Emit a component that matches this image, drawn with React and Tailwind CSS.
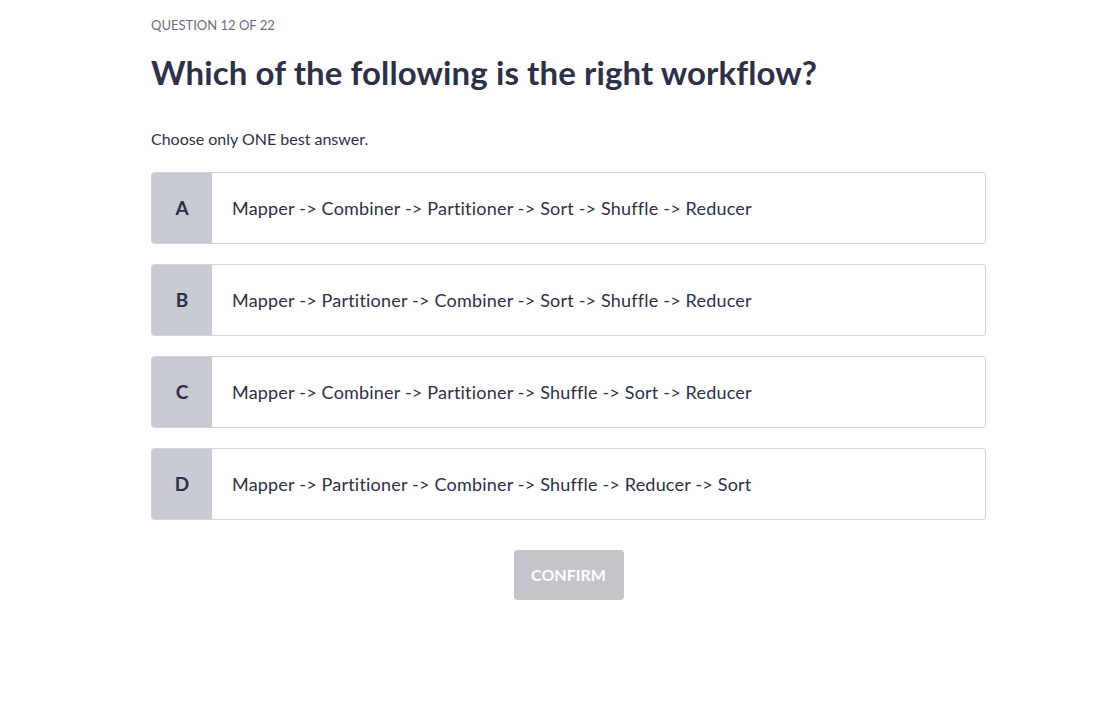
export default function App() {
  const opts = [
    ["A", "Mapper -> Combiner -> Partitioner -> Sort -> Shuffle -> Reducer"],
    ["B", "Mapper -> Partitioner -> Combiner -> Sort -> Shuffle -> Reducer"],
    ["C", "Mapper -> Combiner -> Partitioner -> Shuffle -> Sort -> Reducer"],
    ["D", "Mapper -> Partitioner -> Combiner -> Shuffle -> Reducer -> Sort"],
  ];
  return (
    <div className="min-h-[707px] bg-white pl-[151px] pt-[16px]" style={{ fontFamily: "Lato, 'Noto Sans', sans-serif" }}>
      <div className="w-[835px]">
        <div className="text-[13px] leading-[18px] uppercase text-[#6b6e80]">Question 12 of 22</div>
        <h1 className="mt-[18px] text-[33px] leading-[40px] font-bold tracking-[0.1px] text-[#2e3047]">Which of the following is the right workflow?</h1>
        <p className="mt-[36px] text-[16px] leading-[22px] text-[#2e3047]">Choose only ONE best answer.</p>
        <div className="mt-[22px] flex flex-col gap-[20px]">
          {opts.map(([l, t]) => (
            <div key={l} className="flex h-[72px] rounded-[3px] border border-[#d3d4dc] overflow-hidden">
              <div className="w-[60px] bg-[#c9cbd4] flex items-center justify-center text-[19px] font-bold text-[#2e3047]">{l}</div>
              <div className="flex items-center pl-[20px] text-[18px] tracking-[0.2px] text-[#2e3047]">{t}</div>
            </div>
          ))}
        </div>
        <div className="mt-[30px] flex justify-center">
          <button className="w-[110px] h-[50px] rounded-[4px] bg-[#c4c5cb] text-white font-bold text-[16px]">CONFIRM</button>
        </div>
      </div>
    </div>
  );
}
